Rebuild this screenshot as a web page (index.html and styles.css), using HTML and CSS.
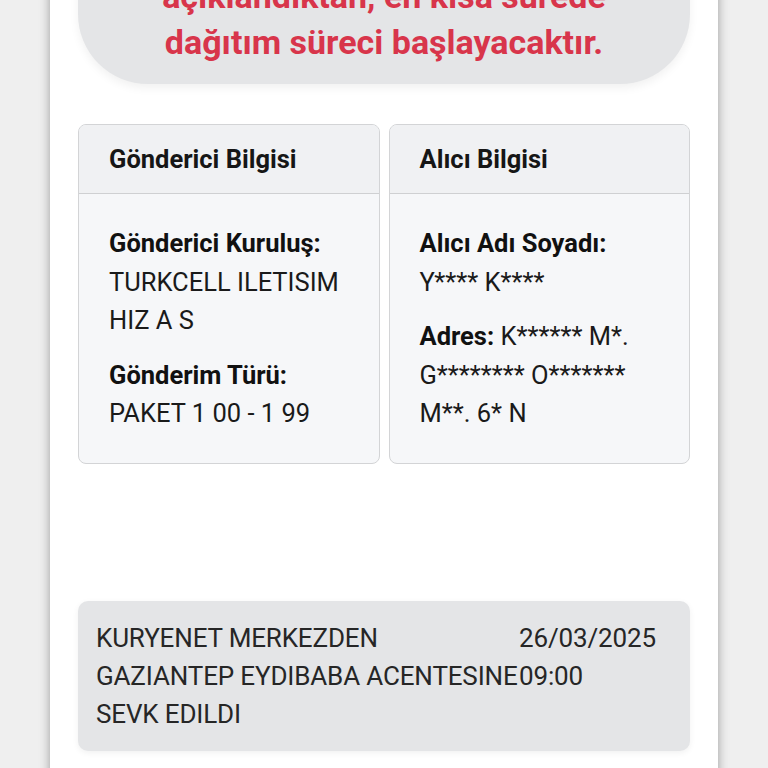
FILE: index.html
```html
<!DOCTYPE html>
<html lang="tr">
<head>
<meta charset="utf-8">
<link rel="stylesheet" href="styles.css">
</head>
<body>
<div class="panel">
  <div class="notice">
    <p>açıklandıktan, en kısa sürede<br>dağıtım süreci başlayacaktır.</p>
  </div>

  <div class="cards">
    <div class="card">
      <div class="card-head">Gönderici Bilgisi</div>
      <div class="card-body">
        <div class="field">
          <div class="label">Gönderici Kuruluş:</div>
          <div>TURKCELL ILETISIM HIZ A S</div>
        </div>
        <div class="field">
          <div class="label">Gönderim Türü:</div>
          <div>PAKET 1 00 - 1 99</div>
        </div>
      </div>
    </div>
    <div class="card">
      <div class="card-head">Alıcı Bilgisi</div>
      <div class="card-body">
        <div class="field">
          <div class="label">Alıcı Adı Soyadı:</div>
          <div>Y**** K****</div>
        </div>
        <div class="field">
          <div><b class="label">Adres:</b> K****** M*. G******** O******* M**. 6* N</div>
        </div>
      </div>
    </div>
  </div>

  <div class="status">
    <div class="status-text">KURYENET MERKEZDEN<br>GAZIANTEP EYDIBABA ACENTESINE<br>SEVK EDILDI</div>
    <div class="status-time">26/03/2025<br>09:00</div>
  </div>
</div>
</body>
</html>
```

FILE: styles.css
```css
html, body {
  margin: 0;
  padding: 0;
}
body {
  background: #efefef;
  font-family: Roboto, "Liberation Sans", sans-serif;
  overflow: hidden;
  height: 768px;
}
.panel {
  width: 612px;
  margin: 0 auto;
  padding: 0 28px 40px;
  background: #ffffff;
  box-shadow: 0 0 10px rgba(0, 0, 0, 0.35);
  min-height: 800px;
}
.notice {
  margin-top: -46px;
  background: #e4e5e7;
  border-radius: 0 0 70px 70px;
  padding: 19px 20px 19px;
  box-shadow: 0 4px 10px rgba(0, 0, 0, 0.06);
}
.notice p {
  margin: 0;
  text-align: center;
  color: #d8354b;
  font-weight: 700;
  font-size: 34px;
  line-height: 46px;
}
.cards {
  margin-top: 40px;
  display: grid;
  grid-template-columns: 1fr 1fr;
  gap: 9px;
}
.card {
  border: 1px solid #d3d4d6;
  border-radius: 8px;
  overflow: hidden;
  background: #f6f7f9;
}
.card-head {
  height: 68px;
  display: flex;
  align-items: center;
  padding: 0 30px;
  background: #f0f1f3;
  border-bottom: 1px solid #cfd0d2;
  font-size: 25.5px;
  font-weight: 700;
  color: #161616;
}
.card-body {
  padding: 30px 30px 30px;
  font-size: 25.5px;
  line-height: 38.5px;
  color: #1a1a1a;
  display: flex;
  flex-direction: column;
  gap: 16px;
}
.label {
  font-weight: 700;
  color: #111;
}
.status {
  margin-top: 137px;
  background: #e4e5e7;
  border-radius: 10px;
  padding: 18px 18px;
  display: grid;
  grid-template-columns: 423px auto;
  font-size: 26px;
  line-height: 38px;
  color: #262626;
  letter-spacing: -0.15px;
  box-shadow: 0 2px 6px rgba(0, 0, 0, 0.06);
}
.status-text {
  white-space: nowrap;
}
```
